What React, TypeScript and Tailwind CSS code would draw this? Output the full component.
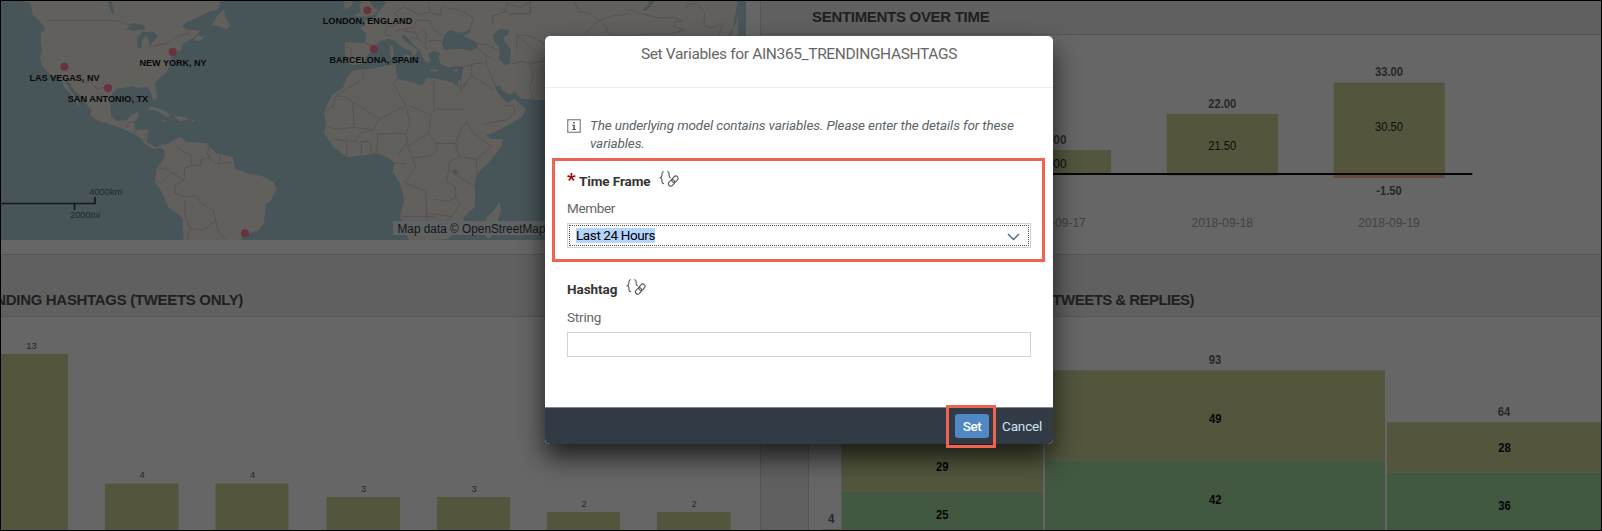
import React from "react";

type LabelProps = { x: number; y: number; w: number; size: number; fill: string; bold?: boolean; children: string };

function Label({ x, y, w, size, fill, bold, children }: LabelProps) {
  return (
    <text x={x} y={y} fontSize={size} fill={fill} fontWeight={bold ? 700 : 400} textAnchor="middle" textLength={w} lengthAdjust="spacingAndGlyphs">
      {children}
    </text>
  );
}

const SERIES = "#53563d";
const SERIES_B = "#425841";

const cities = [
  { name: "LAS VEGAS, NV", x: 64.4, y: 66.7, lx: 64.5, ly: 80.7, w: 70 },
  { name: "SAN ANTONIO, TX", x: 108, y: 88, lx: 108, ly: 102, w: 80.5 },
  { name: "NEW YORK, NY", x: 172.7, y: 52, lx: 173, ly: 66, w: 67 },
  { name: "LONDON, ENGLAND", x: 367.4, y: 10.3, lx: 367.5, ly: 24.2, w: 89.5 },
  { name: "BARCELONA, SPAIN", x: 373.8, y: 49, lx: 374, ly: 63, w: 89 },
];

function WorldMap() {
  return (
    <svg className="block h-[239px] w-[745px]" viewBox="1 1 745 239" fontFamily="'Liberation Sans', Arial, sans-serif">
      <rect x="0" y="0" width="746" height="240" fill="#475559" />
      <g transform="scale(.33333)" strokeLinejoin="round">
        <g fill="#61605c">
          <path d="M65 0L92 12 98 45 118 62 134 82 131 98 124 94 122 130 126 150 120 172 126 198 150 222 185 240 192 262 212 282 222 302 240 320 234 304 214 274 198 246 206 244 222 272 248 292 256 308 274 330 272 346 290 360 340 376 376 390 402 403 425 417 436 434 460 446 480 443 493 450 494 472 470 506 465 545 485 575 505 622 548 655 551 722 722 722 732 704 775 692 792 668 797 615 812 602 829 568 820 545 788 529 750 522 706 506 698 472 650 460 618 430 560 425 540 411 500 432 484 434 468 443 440 425 447 389 405 389 402 365 416 352 414 336 392 344 382 360 350 362 334 350 331 310 335 284 350 266 385 262 400 258 412 264 440 260 452 276 458 296 468 302 472 290 464 252 480 232 500 217 512 190 516 165 545 148 549 130 580 115 600 92 560 88 545 78 560 66 590 54 620 38 655 28 662 0Z" />
          <path d="M636 74L650 50 672 28 676 52 690 76 680 88 660 80ZM582 120L592 104 606 110 626 102 596 124ZM440 328L456 320 490 330 514 346 500 350 470 332ZM522 352L540 348 566 358 540 364ZM484 360l16 0 -6 6ZM572 360l14 1 -6 5Z" />
          <path d="M1024 28L1034 22 1030 4 1050 2 1060 8 1048 24ZM1062 48L1082 36 1078 14 1090 0 1106 0 1120 22 1134 30 1122 44 1096 50Z" />
          <path d="M1098 60L1120 62 1128 46 1136 36 1156 10 1162 0 2214 0 2214 322 1640 300 1600 300 1560 294 1546 276 1530 284 1506 270 1500 258 1486 260 1490 274 1508 294 1520 308 1530 304 1545 296 1552 306 1578 326 1565 352 1520 378 1480 398 1448 408 1440 375 1412 320 1378 266 1372 244 1384 236 1390 200 1366 198 1345 203 1322 192 1316 172 1320 160 1304 152 1284 160 1292 182 1280 190 1268 174 1256 148 1236 130 1214 104 1202 108 1222 130 1254 150 1246 166 1238 168 1234 154 1206 142 1184 122 1164 116 1140 124 1122 140 1104 164 1090 190 1056 196 1036 182 1034 126 1096 130 1098 100 1082 86Z" />
          <path d="M1060 210L1104 208 1186 192 1192 236 1240 248 1266 256 1280 236 1302 234 1360 248 1372 260 1392 280 1420 326 1436 362 1450 400 1474 416 1508 418 1504 440 1470 484 1432 520 1424 546 1426 590 1424 622 1392 650 1388 668 1364 700 1340 718 1226 722 1200 648 1212 602 1208 576 1198 548 1178 514 1184 488 1162 472 1128 460 1092 466 1042 472 1002 444 986 420 972 398 978 372 972 336 996 286 1030 262 1040 234Z" />
          <path d="M1498 606L1504 628 1484 690 1470 716 1456 712 1454 684 1460 650 1480 634ZM1170 138l8 -2 4 36 -10 4ZM1212 166l26 0 -6 12 -18 -6ZM1290 208l26 2 -4 6 -22 -4ZM1358 210l18 -3 -8 8Z" />
        </g>
        <g fill="#475559">
          <path d="M378 88L398 68 432 76 436 90 420 88 402 92ZM412 142L412 112 424 98 434 94 440 104 426 120 424 144ZM436 96L462 96 474 112 460 122 450 140 446 120ZM552 78L566 66 618 58 596 72 572 74ZM324 0L334 0 342 42 338 44 328 18Z" />
          <path d="M1326 130L1334 104 1350 90 1376 98 1404 92 1412 84 1410 98 1390 108 1430 126 1434 142 1414 152 1380 146 1354 148 1332 150ZM1478 104L1500 86 1528 90 1524 104 1510 110 1514 126 1532 146 1530 190 1516 196 1498 178 1498 142 1482 122ZM1356 512l12 -6 6 12 -12 8ZM1928 30L1942 18 1950 0 1964 4 1948 22 1934 34ZM2214 0L2196 100 2180 120 2158 122 2184 108 2208 70 2216 30Z" />
        </g>
        <g fill="none" stroke="#5b4f58" strokeWidth="3">
          <path d="M138 62H352L376 72 402 76M444 144L462 138 490 132 512 124 534 108 566 100 570 82M194 240H236L254 248 272 246 290 268 310 262 324 280M376 388L388 366 404 364M400 400L418 386M432 418L442 398M528 438L552 456 572 464 576 498 554 504 552 540 500 508 472 504M470 544L484 548 508 522 532 516M552 540L526 556 526 580 552 590 588 588 604 610 640 632 648 664 630 674 610 690 570 686 562 720M554 600L556 650 570 686M648 664L654 692 676 720M628 436L622 462 646 492 694 486M662 462L656 488M576 498L602 496 604 478 630 474" />
          <path d="M1034 290L1006 288 1000 320 974 334M1006 288L1090 236 1088 212M1034 290L1138 356 1218 318 1180 252 1190 236M1058 306L1062 382 1008 388 976 376M1062 382L1120 390 1138 356M1218 318L1230 370 1218 400 1134 402 1130 456M1034 418L1062 426 1084 398 1120 390M1040 470V426L1002 414M1084 464V424L1110 424 1114 460M1218 400L1222 428 1192 468M1230 318L1292 346 1286 400 1222 440M1302 242V328H1396M1302 328L1292 346M1286 400L1308 430 1366 430 1386 382 1404 362M1222 440L1238 474 1296 466 1312 446 1308 430M1366 430L1378 470 1348 484 1346 510 1340 544 1366 562 1368 590 1346 604 1304 598M1304 650H1204M1238 474L1246 500 1216 548 1206 546M1216 548L1262 568 1278 570 1280 640 1356 650 1380 610 1368 590M1378 470L1430 478 1475 440 1420 400 1400 370M1430 478V520M1346 510L1378 530 1424 560M1280 640V680L1314 694 1342 660 1356 650M1184 490H1218" />
          <path d="M1036 140L1054 146 1050 190M1096 130L1136 142M1120 40L1148 62 1160 80 1154 100 1174 110M1160 80L1186 76 1196 50 1182 40 1210 20 1256 44 1290 36 1286 2M1186 92L1242 82 1250 60 1290 62 1300 86 1324 106M1210 94L1244 96 1256 118 1276 132 1280 150M1232 110L1256 118M1262 84L1280 104 1276 132M1286 122L1326 122M1290 36L1320 46 1326 20 1380 30 1420 54 1410 84" />
          <path transform="translate(900)" d="M484 240L482 276M490 200L530 190 550 190M515 190V228L545 245 582 268M484 262L515 228M480 275L500 250M556 164L560 196 575 230 588 260M690 186L700 230 690 262 700 300M630 192L665 184 690 190 735 182M548 375L585 365 620 360 645 340 640 315 615 318M520 130L560 135 600 152M530 144L560 168 578 176M580 76L576 48 614 36 620 12 662 22 692 6 688 40 640 38M650 150V106L690 108 735 132M650 106L700 148" />
          <path d="M1718 0L1740 36 1770 40 1796 62 1840 46 1876 44 1890 28 1920 40 1976 54 2024 52 2050 66 2024 64 2022 80 2052 90 2004 104 1972 100 1870 108 1826 104 1820 82 1796 62 1770 86 1754 110M2056 28L2064 14 2092 10 2114 38 2112 76 2130 84 2170 70 2150 120M1500 22L1530 42 1590 42 1594 20" />
        </g>
      </g>
      <g fill="#6a313e">
        {cities.map((c) => (
          <circle key={c.name} cx={c.x} cy={c.y} r="4" />
        ))}
        <circle cx="245" cy="233.3" r="4" />
      </g>
      {cities.map((c) => (
        <Label key={c.name} x={c.lx} y={c.ly} w={c.w} size={9.8} fill="#080808" bold>
          {c.name}
        </Label>
      ))}
      <path d="M0 203.5H95V197M74.5 204V210" fill="none" stroke="#17191a" strokeWidth="1.7" />
      <Label x={105.8} y={194.7} w={33} size={9.8} fill="#232829">4000km</Label>
      <Label x={85.2} y={217.7} w={30} size={9.8} fill="#232829">2000mi</Label>
      <rect x="393" y="221" width="353" height="14" fill="#5f6365" />
      <Label x={471.5} y={232.5} w={148} size={12} fill="#161616">Map data © OpenStreetMap</Label>
    </svg>
  );
}

const hashtagBars = [
  { x: 0, w: 68, y: 354, n: "13", c: 31.5 },
  { x: 105, w: 73.5, y: 483.5, n: "4", c: 142 },
  { x: 215.5, w: 73, y: 483.5, n: "4", c: 252.5 },
  { x: 326.5, w: 73.5, y: 497, n: "3", c: 363.5 },
  { x: 437, w: 73, y: 497, n: "3", c: 474 },
  { x: 547, w: 73, y: 512, n: "2", c: 584 },
  { x: 657, w: 73.5, y: 512, n: "2", c: 694 },
];

function HashtagChart() {
  return (
    <svg className="block h-[213px] w-[759px]" viewBox="1 317 759 213" fontFamily="'Liberation Sans', Arial, sans-serif">
      {hashtagBars.map((b) => (
        <g key={b.x}>
          <rect x={b.x} y={b.y} width={b.w} height={531 - b.y} fill={SERIES} />
          <Label x={b.c} y={b.y - 5.5} w={b.n.length * 5.2} size={9.8} fill="#23292c">{b.n}</Label>
        </g>
      ))}
    </svg>
  );
}

function SentimentChart() {
  return (
    <svg className="block h-[219px] w-[840px]" viewBox="761 35 840 219" fontFamily="'Liberation Sans', Arial, sans-serif">
      <rect x="1000" y="150" width="111" height="25" fill={SERIES} />
      <rect x="1166.7" y="114" width="111.3" height="61.5" fill={SERIES} />
      <rect x="1333.7" y="82.5" width="111" height="86" fill={SERIES} />
      <rect x="1333.7" y="168.5" width="111" height="5" fill="#57523a" />
      <rect x="1333.7" y="173.5" width="111" height="4.5" fill="#654a40" />
      <rect x="900" y="173" width="572.3" height="2" fill="#060606" />
      <Label x={1055} y={144} w={23} size={12} fill="#272829" bold>8.00</Label>
      <Label x={1055} y={168} w={23} size={12} fill="#0c0d09">8.00</Label>
      <Label x={1222.3} y={107.7} w={28} size={12} fill="#272829" bold>22.00</Label>
      <Label x={1222.3} y={149.5} w={28} size={12} fill="#0c0d09">21.50</Label>
      <Label x={1389} y={76.3} w={28} size={12} fill="#272829" bold>33.00</Label>
      <Label x={1389} y={131} w={28} size={12} fill="#0c0d09">30.50</Label>
      <Label x={1389} y={194.8} w={25.5} size={12} fill="#272829" bold>-1.50</Label>
      <Label x={1055} y={227} w={61.5} size={12.6} fill="#414243">2018-09-17</Label>
      <Label x={1222.3} y={227} w={61.5} size={12.6} fill="#414243">2018-09-18</Label>
      <Label x={1389} y={227} w={61.5} size={12.6} fill="#414243">2018-09-19</Label>
    </svg>
  );
}

function RepliesChart() {
  return (
    <svg className="block h-[213px] w-[792px]" viewBox="809 317 792 213" fontFamily="'Liberation Sans', Arial, sans-serif">
      <rect x="823" y="529" width="16.5" height="2" fill={SERIES} />
      <rect x="841.3" y="410" width="201.7" height="81.7" fill={SERIES} />
      <rect x="841.3" y="491.7" width="201.7" height="40" fill={SERIES_B} />
      <rect x="1045" y="370.3" width="340" height="90.5" fill={SERIES} />
      <rect x="1045" y="460.8" width="340" height="70" fill={SERIES_B} />
      <rect x="1387" y="422.3" width="215" height="50.2" fill={SERIES} />
      <rect x="1387" y="472.5" width="215" height="60" fill={SERIES_B} />
      <Label x={831.3} y={522.5} w={6.5} size={12} fill="#272829" bold>4</Label>
      <Label x={942.3} y={470.8} w={12.5} size={12} fill="#050505" bold>29</Label>
      <Label x={942.3} y={519} w={12.5} size={12} fill="#050505" bold>25</Label>
      <Label x={1215} y={364} w={12.5} size={12} fill="#272829" bold>93</Label>
      <Label x={1215.3} y={422.7} w={12.5} size={12} fill="#050505" bold>49</Label>
      <Label x={1215.3} y={504} w={12.5} size={12} fill="#050505" bold>42</Label>
      <Label x={1504} y={416} w={12.5} size={12} fill="#272829" bold>64</Label>
      <Label x={1504.5} y={452} w={12.5} size={12} fill="#050505" bold>28</Label>
      <Label x={1504.5} y={509.7} w={12.5} size={12} fill="#050505" bold>36</Label>
    </svg>
  );
}

function FormulaLinkIcon() {
  return (
    <svg className="h-4 w-5" viewBox="0 0 20 16" fill="none" stroke="#55585b" strokeWidth="1.1" strokeLinecap="round" strokeLinejoin="round">
      <path d="M4.6 .8C3.200 .8 2.900 1.600 2.900 2.800v1.800C2.900 5.800 2.300 6.500 1 6.700 2.300 6.900 2.900 7.600 2.900 8.800v1.800c0 1.200 .3 2 1.700 2" />
      <path d="M8.400 .8c1.400 0 1.700 .8 1.700 2v1.800c0 1.200 .5 1.900 1.400 2.100" />
      <g transform="rotate(-48 14.300 10)">
        <rect x="13.200" y="7.700" width="7" height="4.600" rx="2.300" />
        <rect x="8.200" y="7.700" width="7" height="4.600" rx="2.300" />
      </g>
    </svg>
  );
}

function Dialog() {
  return (
    <div
      role="dialog"
      className="absolute left-[544px] top-[35px] flex h-[408px] w-[508px] flex-col overflow-hidden rounded-[5px] bg-white font-['Roboto','Liberation_Sans',sans-serif] text-[13.500px] text-[#333] shadow-[0_13px_26px_rgba(0,0,0,0.7)]"
    >
      <header className="h-[52px] shrink-0 border-b border-[#ececec] pt-2 text-center text-[15.500px] leading-5 text-[#666]">
        <span className="tracking-[-0.350px]">Set Variables for AIN365_TRENDINGHASHTAGS</span>
      </header>
      <div className="flex grow flex-col px-[22px]">
        <div className="mt-[29px] flex h-[37px] text-[13.500px] italic leading-[17.500px] text-[#5b6468]">
          <svg className="mt-[2px] h-[14px] w-[14px] shrink-0" viewBox="0 0 14 14">
            <rect x=".75" y=".75" width="12.500" height="12.500" fill="none" stroke="#7b8489" strokeWidth="1.200" />
            <path d="M6.200 3h1.700v1.500H6.200zM5.200 5.700h2.700v4.200h1.100v1H5.100v-1h1.200V6.700H5.200z" fill="#555c60" />
          </svg>
          <p className="ml-[9px] w-[440px] tracking-[-0.120px]">The underlying model contains variables. Please enter the details for these variables.</p>
        </div>
        <div className="mt-[16px] flex h-[17px] items-center">
          <span className="h-[17px] w-3 text-[19px] font-bold leading-[20px] text-[#b00000]">*</span>
          <span className="w-[72px] whitespace-nowrap pt-1 font-bold leading-4 tracking-[-0.100px]">Time Frame</span>
          <div className="ml-[8px]">
            <FormulaLinkIcon />
          </div>
        </div>
        <label className="mt-[13px] h-4 leading-4 tracking-[-0.350px] text-[#666]">Member</label>
        <div className="mt-[7px] h-[25px] border border-[#d2d2d2] p-px">
          <div className="flex h-full items-center justify-between border border-dotted border-[#555] pl-[6px] pr-[8px]">
            <span className="h-[15px] bg-[#b3d4fd] leading-[15px] tracking-[-0.400px] text-black">Last 24 Hours</span>
            <svg className="mt-[2px] h-2 w-[13px]" viewBox="0 0 13 8" fill="none" stroke="#426a94" strokeWidth="1.400">
              <path d="M1 1l5.500 5.500L12 1" />
            </svg>
          </div>
        </div>
        <div className="mt-[30px] flex h-[17px] items-center">
          <span className="w-[52px] whitespace-nowrap pt-1 font-bold leading-4 tracking-[-0.050px]">Hashtag</span>
          <div className="ml-[7px]">
            <FormulaLinkIcon />
          </div>
        </div>
        <label className="mt-[14px] h-4 leading-4 tracking-[-0.200px] text-[#666]">String</label>
        <div className="mt-[7px] h-[25px] border border-[#d2d2d2]" />
      </div>
      <footer className="flex h-[37px] shrink-0 items-center justify-end border-t border-[#7f868d] bg-[#323b45] pr-[11px]">
        <button className="h-[24px] w-[34px] rounded-[3px] bg-[#5087c4] font-medium tracking-[-0.500px] text-white">Set</button>
        <button className="ml-[13px] w-[40px] text-center tracking-[-0.150px] text-[#cfe2f5]">Cancel</button>
      </footer>
    </div>
  );
}

export default function App() {
  return (
    <div className="relative h-[531px] w-[1602px] overflow-hidden border border-black bg-[#666] font-['Liberation_Sans',Arial,sans-serif]">
      <div className="flex h-[529px] w-[1600px]">
        <section className="flex w-[759px] shrink-0 flex-col">
          <div className="h-[253px] shrink-0">
            <WorldMap />
          </div>
          <div className="flex h-[63px] w-[759px] shrink-0 items-end overflow-hidden border-y border-[#565656] bg-[#606060] pb-[6px]">
            <h2 className="flex w-[242px] shrink-0 justify-end overflow-hidden whitespace-nowrap text-[15px] font-bold leading-5 tracking-[-0.320px] text-[#1f2021]">
              NDING HASHTAGS (TWEETS ONLY)
            </h2>
          </div>
          <HashtagChart />
        </section>
        <section className="flex w-[841px] flex-col border-l border-[#555]">
          <div className="flex h-[34px] shrink-0 items-center border-b border-[#565656] bg-[#606060] pb-px pl-[51px]">
            <h2 className="whitespace-nowrap text-[15px] font-bold leading-5 tracking-[-0.020em] text-[#1f2021]">SENTIMENTS OVER TIME</h2>
          </div>
          <SentimentChart />
          <div className="flex h-[63px] shrink-0 items-end border-y border-[#565656] bg-[#606060] pb-[6px] pl-[51px]">
            <h2 className="flex w-[382px] justify-end whitespace-nowrap text-[15px] font-bold leading-5 tracking-[-0.550px] text-[#1f2021]">
              TRENDING HASHTAGS (TWEETS &amp; REPLIES)
            </h2>
          </div>
          <div className="flex">
            <div className="w-[48px] shrink-0 border-r border-[#555] bg-[#606060]" />
            <RepliesChart />
          </div>
        </section>
      </div>
      <Dialog />
      <div className="pointer-events-none absolute left-[551px] top-[157px] h-[104px] w-[493px] border-[3px] border-[#ee6352]" />
      <div className="pointer-events-none absolute left-[945px] top-[404px] h-[43px] w-[50px] border-[3px] border-[#ee6352]" />
    </div>
  );
}
